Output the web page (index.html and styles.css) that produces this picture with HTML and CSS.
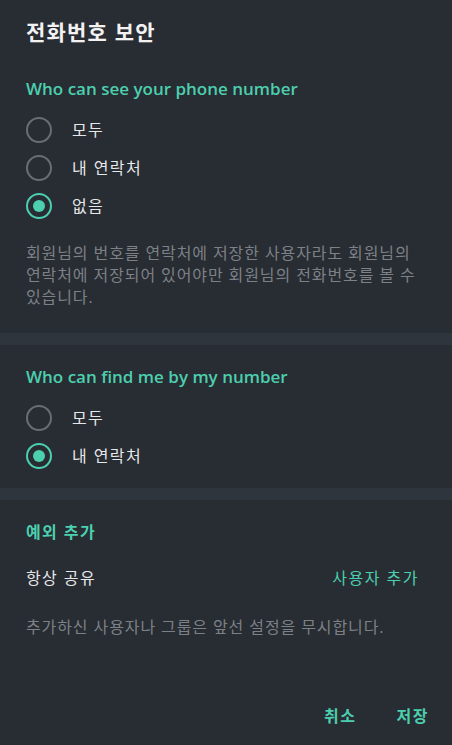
FILE: index.html
```html
<!DOCTYPE html>
<html lang="ko">
<head>
<meta charset="utf-8">
<link rel="stylesheet" href="styles.css">
</head>
<body>
<div class="dialog">
  <h1 class="title">전화번호 보안</h1>

  <section class="section first">
    <h2 class="section-head">Who can see your phone number</h2>
    <div class="options">
      <div class="option"><span class="radio"></span><span class="label">모두</span></div>
      <div class="option"><span class="radio"></span><span class="label">내 연락처</span></div>
      <div class="option"><span class="radio checked"></span><span class="label">없음</span></div>
    </div>
    <p class="note note-first">회원님의 번호를 연락처에 저장한 사용자라도 회원님의 연락처에 저장되어 있어야만 회원님의 전화번호를 볼 수 있습니다.</p>
  </section>

  <div class="band"></div>

  <section class="section">
    <h2 class="section-head">Who can find me by my number</h2>
    <div class="options">
      <div class="option"><span class="radio"></span><span class="label">모두</span></div>
      <div class="option"><span class="radio checked"></span><span class="label">내 연락처</span></div>
    </div>
  </section>

  <div class="band band-second"></div>

  <section class="section">
    <h2 class="section-head kr">예외 추가</h2>
    <div class="share-row">
      <span class="label">항상 공유</span>
      <span class="link">사용자 추가</span>
    </div>
    <p class="note note-last">추가하신 사용자나 그룹은 앞선 설정을 무시합니다.</p>
  </section>

  <div class="footer">
    <span class="btn">취소</span>
    <span class="btn">저장</span>
  </div>
</div>
</body>
</html>
```

FILE: styles.css
```css
html, body {
  margin: 0;
  padding: 0;
  background: #282c33;
}
body {
  font-family: "Open Sans", "Noto Sans CJK KR", sans-serif;
  color: #e6e7e8;
  width: 452px;
  height: 745px;
  overflow: hidden;
}
.dialog {
  display: flex;
  flex-direction: column;
}
.title {
  margin: 0;
  padding: 18px 26px 0;
  font-size: 21px;
  line-height: 28px;
  font-weight: 700;
  letter-spacing: 1.2px;
  color: #f2f2f2;
}
.section {
  padding: 20px 26px 0;
}
.section.first {
  padding-top: 31px;
}
.section-head {
  margin: 0;
  font-size: 17px;
  line-height: 24px;
  font-weight: 600;
  color: #4ccfae;
}
.section-head.kr {
  font-size: 16px;
  font-weight: 700;
  letter-spacing: 1.4px;
}
.options {
  margin-top: 10px;
  display: flex;
  flex-direction: column;
}
.option {
  height: 38px;
  display: flex;
  align-items: center;
  gap: 20px;
}
.radio {
  width: 26px;
  height: 26px;
  box-sizing: border-box;
  border: 2px solid #6a6d71;
  border-radius: 50%;
  display: flex;
  align-items: center;
  justify-content: center;
  flex: none;
}
.radio.checked {
  border-color: #4ccfae;
}
.radio.checked::after {
  content: "";
  width: 12px;
  height: 12px;
  border-radius: 50%;
  background: #4ccfae;
}
.label {
  font-size: 16px;
  line-height: 24px;
  letter-spacing: 1.4px;
  color: #e6e7e8;
}
.note {
  margin: 0;
  font-size: 16px;
  line-height: 22px;
  letter-spacing: 0.9px;
  color: #7d8186;
}
.note-first {
  margin-top: 17px;
  margin-bottom: 25px;
}
.band {
  height: 12px;
  background: #2e353c;
}
.band-second {
  margin-top: 13px;
}
.share-row {
  margin-top: 15px;
  height: 38px;
  display: flex;
  align-items: center;
  justify-content: space-between;
  padding-right: 7px;
}
.link {
  font-size: 16px;
  line-height: 24px;
  letter-spacing: 1.5px;
  color: #4ccfae;
}
.note-last {
  margin-top: 19px;
}
.footer {
  margin-top: 66px;
  display: flex;
  justify-content: flex-end;
  gap: 40px;
  padding-right: 23px;
}
.btn {
  font-size: 16px;
  line-height: 24px;
  font-weight: 700;
  letter-spacing: 1.5px;
  color: #4ccfae;
}
```
